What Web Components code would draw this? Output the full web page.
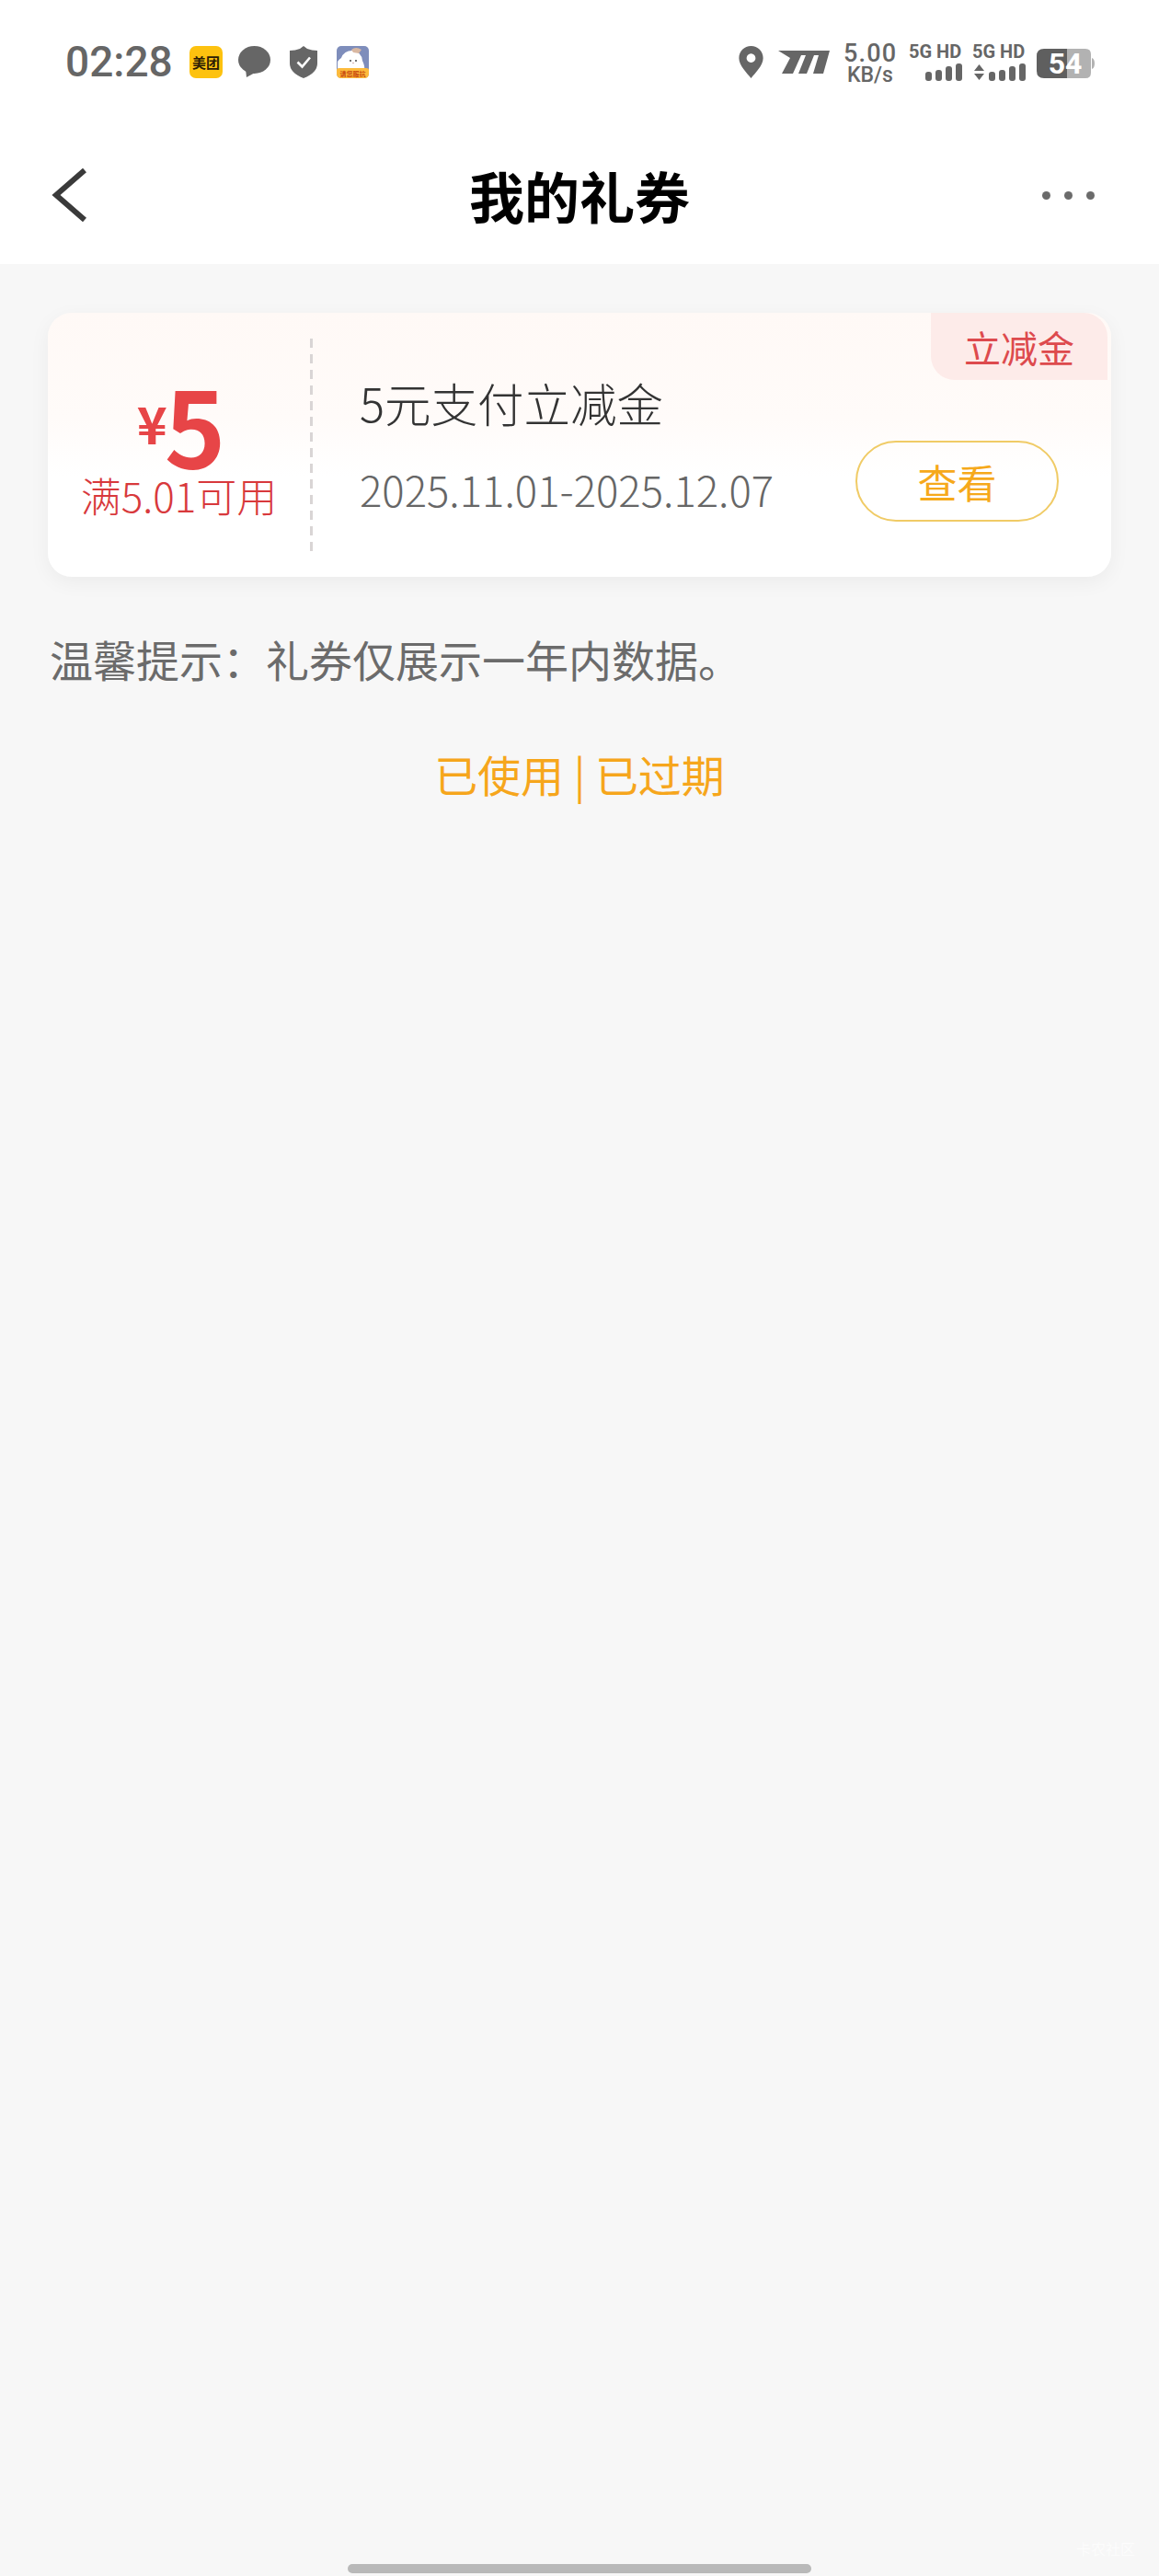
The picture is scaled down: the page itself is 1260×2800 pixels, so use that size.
<!DOCTYPE html>
<html lang="zh">
<head>
<meta charset="utf-8">
<title>我的礼券</title>
<style>
  html, body { margin: 0; padding: 0; background: #f7f7f7; }
  body { font-family: "Noto Sans CJK SC", "Noto Sans", sans-serif; }
</style>
</head>
<body>
<coupon-page>
  <status-bar></status-bar>
  <nav-bar>我的礼券</nav-bar>
  <coupon-card amount="5" rule="满5.01可用" name="5元支付立减金" dates="2025.11.01-2025.12.07" tag="立减金" action="查看"></coupon-card>
  <tip-line>温馨提示&#xFF1A;礼券仅展示一年内数据。</tip-line>
  <history-links></history-links>
</coupon-page>

<script>
class CouponPage extends HTMLElement {
    constructor() {
        super();
        this.attachShadow({ mode: 'open' });
        this.shadowRoot.innerHTML = `
            <style>
                :host { display: flex; flex-direction: column; height: 2800px; position: relative; overflow: hidden; background: #f7f7f7; }
                .home { margin: auto 0 3px 378px; width: 504px; height: 10px; border-radius: 5px; background: #b9b9b9; }
                .mark { position: absolute; left: 1170px; top: 2758px; font-size: 16px; color: #fcfcfc; }
            </style>
            <slot></slot>
            <div class="mark">卡农社区</div>
            <div class="home"></div>
        `;
    }
}

class StatusBar extends HTMLElement {
    constructor() {
        super();
        this.attachShadow({ mode: 'open' });
        // bars for the two sim slots
        const bars = `<rect x="0" y="9" width="7" height="10" rx="3"/><rect x="11" y="7" width="7" height="12" rx="3"/><rect x="22" y="3" width="7" height="16" rx="3"/><rect x="33" y="0" width="7" height="19" rx="3"/>`;
        this.shadowRoot.innerHTML = `
            <style>
                :host { display: flex; align-items: flex-start; height: 130px; padding: 0 70px 0 71px; background: #fff; color: #666; box-sizing: border-box; }
                .time { font-family: Roboto, sans-serif; font-size: 46px; line-height: 33px; margin-top: 51px; font-weight: 500; width: 135px; }
                svg { display: block; flex: none; overflow: visible; }
                .left { display: flex; gap: 21px; margin-top: 50px; }
                .right { display: flex; align-items: flex-start; margin-left: auto; margin-top: 48px; font-family: Roboto, sans-serif; }
                .speed { width: 58px; margin-left: 15px; text-align: center; }
                .speed b { display: block; font-size: 27px; line-height: 21px; font-weight: 500; letter-spacing: 1.2px; }
                .speed span { display: block; font-size: 23px; line-height: 18px; margin-top: 4px; font-weight: 500; }
                .sim { margin-left: 13px; width: 58px; }
                .sim + .sim { margin-left: 11px; }
                .sim b { display: block; font-size: 20px; line-height: 16px; font-family: "Liberation Sans Narrow", Roboto, sans-serif; font-weight: 700; white-space: nowrap; }
                .sim svg { margin: 5px 0 0 auto; }
                .batt { margin-left: 12px; margin-top: 5px; }
            </style>
            <div class="time">02:28</div>
            <div class="left">
                <svg width="36" height="35" viewBox="0 0 36 35">
                    <rect width="36" height="35" rx="7" fill="#fdc20f"/>
                    <text x="18" y="23.500" text-anchor="middle" font-size="15" font-weight="700" fill="#2b1c05" font-family="Noto Sans CJK SC">美团</text>
                </svg>
                <svg width="35" height="35" viewBox="0 0 35 35" style="margin-left:-4px">
                    <ellipse cx="17.500" cy="15" rx="17.500" ry="15" fill="#666"/>
                    <path d="M8 25 L9 34 L20 28z" fill="#666"/>
                </svg>
                <svg width="30" height="35" viewBox="0 0 30 35">
                    <path d="M15 0 L19 3 Q24 5 30 5 V19 Q30 29 15 35 Q0 29 0 19 V5 Q6 5 11 3z" fill="#666"/>
                    <path d="M8.500 17.500 L13.500 22.500 L22 12.500" fill="none" stroke="#fff" stroke-width="2.600"/>
                </svg>
                <svg width="35" height="35" viewBox="0 0 35 35">
                    <rect width="35" height="35" rx="5" fill="#7e8dbb"/>
                    <path d="M1 24 L1 17 Q3 14 5 13 Q8 5 17 5 Q27 6 28 16 Q31 22 30 27 H2z" fill="#fff"/>
                    <path d="M16 4 Q21 0 27 4 L24 8 L18 7z" fill="#d9b8a2"/>
                    <circle cx="15" cy="16" r=".9" fill="#333"/><circle cx="21" cy="16" r=".9" fill="#333"/>
                    <path d="M17 18 l1 1 l1 -1" fill="none" stroke="#b88" stroke-width=".7"/>
                    <path d="M0 26 Q0 24 3 24 H32 Q35 24 35 26 V30 Q35 35 30 35 H5 Q0 35 0 30z" fill="#fdbb3c"/>
                    <text x="17.500" y="32.500" text-anchor="middle" font-size="7" font-weight="700" fill="#c8480e" font-family="Noto Sans CJK SC">请您服抗</text>
                </svg>
            </div>
            <div class="right">
                <svg width="27" height="35" viewBox="0 0 27 36" style="margin-top:2px">
                    <path fill-rule="evenodd" d="M13.500 0 C21 0 27 6 27 13.500 C27 22 18 30 13.500 36 C9 30 0 22 0 13.500 C0 6 6 0 13.500 0z M13.500 8.500 a5 5 0 1 0 .01 0z" fill="#666"/>
                </svg>
                <svg width="56" height="25" viewBox="0 0 56 25" style="margin:7px 0 0 16px">
                    <path d="M0 0 H56 L49 25 H38 L44 5 H39 L31 25 H22 L30 5 H25 L16 25 H4 L13 8z" fill="#666"/>
                </svg>
                <div class="speed"><b>5.00</b><span>KB/s</span></div>
                <div class="sim"><b>5G HD</b>
                    <svg width="40" height="19" viewBox="0 0 40 19" fill="#666">${bars}</svg>
                </div>
                <div class="sim"><b>5G HD</b>
                    <svg width="56" height="19" viewBox="-16 0 56 19" fill="#666"><path d="M-16 8 L-10.500 1 L-5 8z M-16 11 H-5 L-10.500 18z"/>${bars}</svg>
                </div>
                <div class="batt">
                    <svg width="63" height="32" viewBox="0 0 63 32">
                        <path d="M33 0 H53 Q59 0 59 6 V26 Q59 32 53 32 H33z" fill="#b2b2b2"/>
                        <path d="M33 0 H8 Q0 0 0 8 V24 Q0 32 8 32 H33z" fill="#5f5f5f"/>
                        <path d="M60 10 Q63 11 63 16 Q63 21 60 22z" fill="#b2b2b2"/>
                        <text x="31" y="27" text-anchor="middle" font-size="32" font-weight="700" fill="#fff" font-family="Roboto">54</text>
                    </svg>
                </div>
            </div>
        `;
    }
}

class NavBar extends HTMLElement {
    constructor() {
        super();
        this.attachShadow({ mode: 'open' });
        this.shadowRoot.innerHTML = `
            <style>
                :host { display: flex; align-items: center; justify-content: space-between; height: 157px; padding: 7px 70px 0 56px; box-sizing: border-box; background: #fff; color: #000; }
                h1 { margin: 0; font-size: 60px; line-height: 80px; font-weight: 700; position: absolute; left: 0; right: 0; text-align: center; pointer-events: none; }
                .dots { display: flex; gap: 15px; }
                .dots i { width: 9px; height: 9px; border-radius: 50%; background: #6b6b6b; }
                svg { display: block; }
            </style>
            <svg width="38" height="58" viewBox="0 0 38 58"><path d="M36 2 L5 29 L36 56" fill="none" stroke="#3a3a3a" stroke-width="6"/></svg>
            <h1><slot></slot></h1>
            <div class="dots"><i></i><i></i><i></i></div>
        `;
    }
}

class CouponCard extends HTMLElement {
    constructor() {
        super();
        this.attachShadow({ mode: 'open' });
    }

    connectedCallback() {
        const attr = (n) => this.getAttribute(n) || '';
        this.shadowRoot.innerHTML = `
            <style>
                :host { display: flex; position: relative; height: 287px; margin: 53px 52px 0; box-sizing: border-box; padding: 28px 0 25px; border-radius: 26px;
                    background: linear-gradient(#fff9f6 0, #fffbf9 40%, #fff 62%); box-shadow: 0 6px 22px rgba(0,0,0,.05); }
                .left { width: 285px; flex: none; display: flex; flex-direction: column; align-items: center; color: #e74547; }
                .amount { height: 100px; margin-top: 42px; padding-left: 5px; line-height: 100px; font-weight: 700; white-space: nowrap; text-align: center; }
                .amount small { font-size: 56px; line-height: 0; vertical-align: 26px; margin-right: -3px; }
                .amount span { font-size: 113px; }
                .rule { font-size: 44px; line-height: 56px; color: #d8393c; white-space: nowrap; font-weight: 300; }
                .line { width: 3px; flex: none; background: repeating-linear-gradient(#d9d5d5 0 10px, transparent 10px 17px); }
                .info { flex: 1; min-width: 0; margin-left: 51px; padding-right: 57px; }
                .name { font-size: 50.5px; line-height: 70px; margin-top: 34px; color: #333; font-weight: 300; }
                .row { display: flex; justify-content: space-between; align-items: flex-start; }
                .dates { font-size: 45.5px; line-height: 60px; color: #666; white-space: nowrap; margin-top: 29px; font-weight: 300; }
                .btn { width: 221px; height: 88px; box-sizing: border-box; border: 2px solid #f0cb66; border-radius: 44px; display: flex; align-items: center; justify-content: center; font-size: 43px; color: #f6a91b; margin-top: 7px; }
                .tag { position: absolute; top: 0; right: 4px; width: 192px; height: 73px; border-radius: 0 26px 0 26px; background: #fdebe9; color: #dd4a4d; font-size: 40px; display: flex; align-items: center; justify-content: center; box-sizing: border-box; }
            </style>
            <div class="left">
                <div class="amount"><small>¥</small><span>${attr('amount')}</span></div>
                <div class="rule">${attr('rule')}</div>
            </div>
            <div class="line"></div>
            <div class="info">
                <div class="name">${attr('name')}</div>
                <div class="row">
                    <div class="dates">${attr('dates')}</div>
                    <div class="btn">${attr('action')}</div>
                </div>
            </div>
            <div class="tag">${attr('tag')}</div>
        `;
    }
}

class TipLine extends HTMLElement {
    constructor() {
        super();
        this.attachShadow({ mode: 'open' });
        this.shadowRoot.innerHTML = `
            <style>
                :host { display: block; margin: 57px 0 0 54px; font-size: 47px; line-height: 64px; color: #6b6b6b; }
            </style>
            <slot></slot>
        `;
    }
}

class HistoryLinks extends HTMLElement {
    constructor() {
        super();
        this.attachShadow({ mode: 'open' });
        this.shadowRoot.innerHTML = `
            <style>
                :host { display: flex; justify-content: center; margin-top: 61px; font-size: 47px; line-height: 64px; color: #f6a61c; white-space: pre; }
            </style>
            <span>已使用</span><span> | </span><span>已过期</span>
        `;
    }
}

customElements.define('coupon-page', CouponPage);
customElements.define('status-bar', StatusBar);
customElements.define('nav-bar', NavBar);
customElements.define('coupon-card', CouponCard);
customElements.define('tip-line', TipLine);
customElements.define('history-links', HistoryLinks);
</script>
</body>
</html>
